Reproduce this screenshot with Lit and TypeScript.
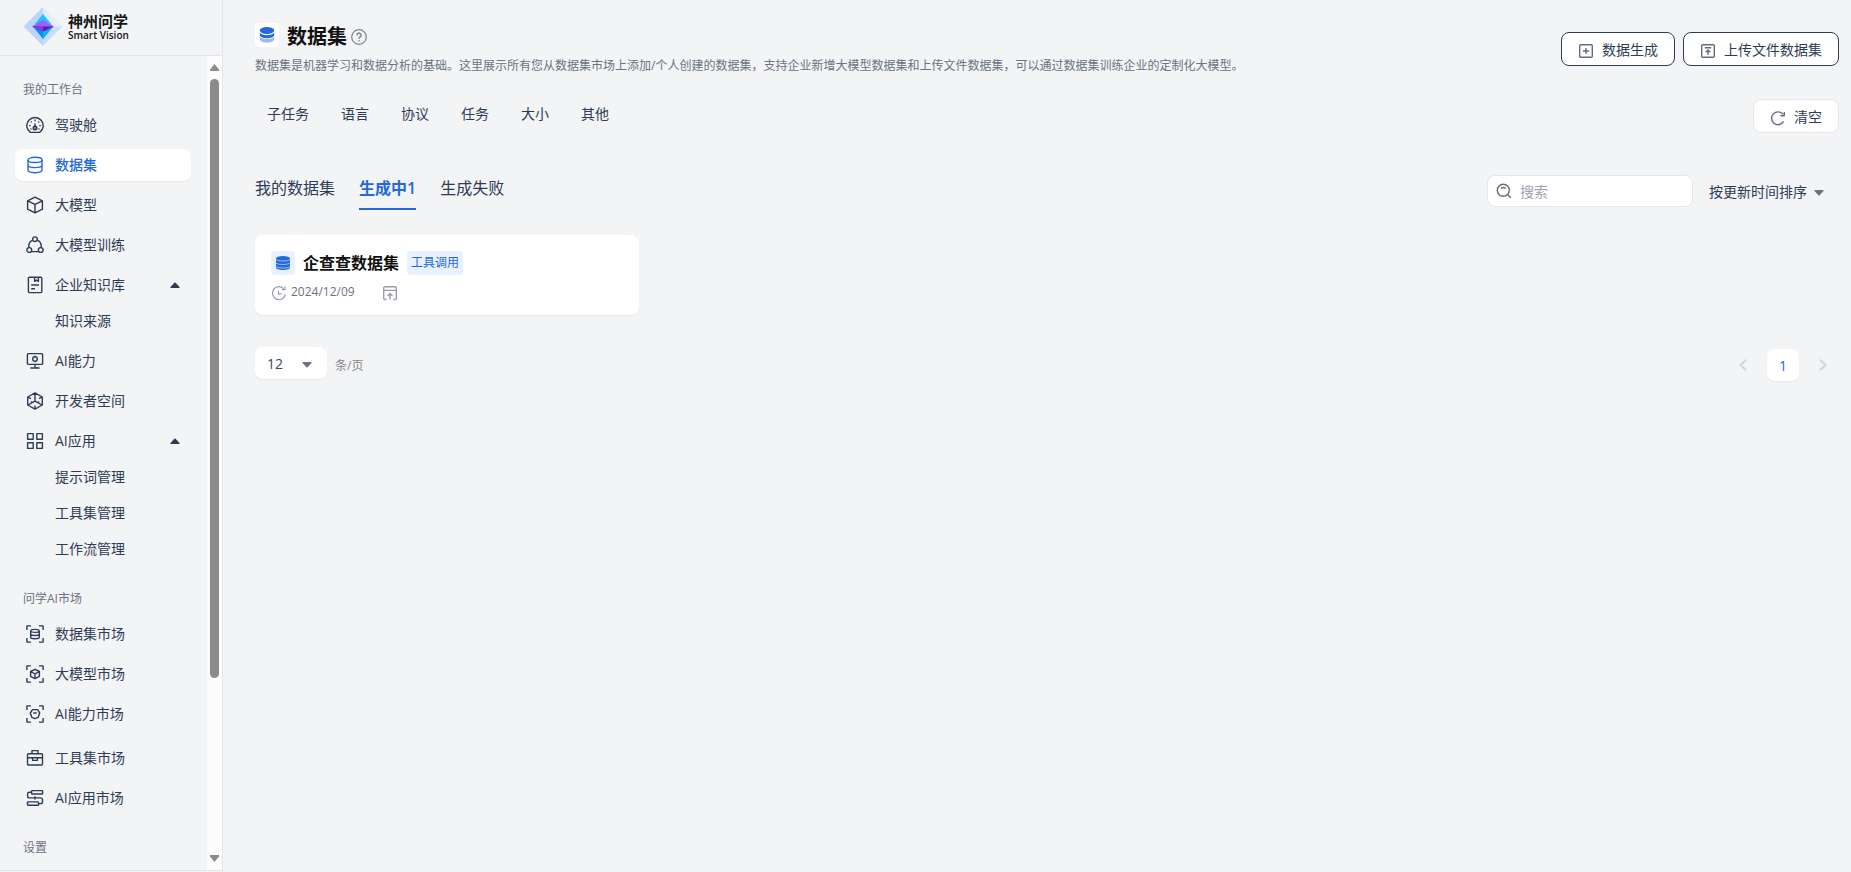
import { LitElement, html, css, svg, nothing } from "lit";
import { customElement, property, state } from "lit/decorators.js";
import { classMap } from "lit/directives/class-map.js";

const corners = svg`<path d="M.9 5V.9H5M13 .9h4.1V5M17.1 13v4.1H13M5 17.1H.9V13"/>`;

const icons: Record<string, unknown> = {
  gauge: svg`<path d="M4.300 16.400A8.200 8.200 0 1 1 13.700 16.400Z"/><circle cx="9" cy="12" r="1.600" stroke-width="1.800"/><path d="M9 10V7.400M9 3.600v1.600M4.800 5.400l.9.9M13.200 5.400l-.9.9M3.200 9.600h1.500M13.300 9.600h1.500M4.500 13h1M12.500 13h1"/>`,
  data: svg`<ellipse cx="9" cy="3.900" rx="7" ry="2.600"/><path d="M2 3.900v10.200c0 1.500 3.100 2.600 7 2.600s7-1.100 7-2.600V3.900M2 9c0 1.500 3.100 2.600 7 2.600S16 10.500 16 9"/>`,
  cube: svg`<path d="M9 1.200 16.400 4.800v8.400L9 16.800 1.600 13.200V4.800ZM1.600 4.800 9 8.400l7.400-3.600M9 8.400v8.400"/>`,
  train: svg`<circle cx="9" cy="3.200" r="2.300"/><circle cx="3.300" cy="14" r="2.400"/><circle cx="14.700" cy="14" r="2.400"/><path d="M6.600 4.200C3.800 5.500 2.500 8.300 2.800 11.600M11.400 4.200c2.800 1.300 4.100 4.100 3.800 7.400M5.700 15.600h6.600"/>`,
  book: svg`<rect x="2.400" y="1.200" width="13.400" height="15.400" rx="1"/><path d="M8.600 1.400v4l1.900-1.200 1.900 1.200v-4M5.200 9h7.800M5.200 12.800h3.800"/>`,
  screen: svg`<rect x="1.400" y="1.600" width="15.200" height="10.800" rx="1"/><circle cx="9" cy="7" r="2.300"/><path d="M9 3.700v1M9 9.300v1M9 12.400v3.400M4.400 16h9.200"/>`,
  dev: svg`<path d="M9 .9 16.300 5v8L9 17.100 1.700 13V5ZM9 1v8.200L2 13M9 9.200l7 3.800M9 13.600V17M2 5l3 1.700M16 5l-3 1.700"/><path d="M5.500 9.200v1.500M12.500 9.200v1.500"/>`,
  apps: svg`<rect x="1.600" y="1.600" width="5.600" height="5.600"/><rect x="10.800" y="1.600" width="5.600" height="5.600"/><rect x="1.600" y="10.800" width="5.600" height="5.600"/><rect x="10.800" y="10.800" width="5.600" height="5.600"/>`,
  dataMarket: svg`${corners}<ellipse cx="9" cy="5.900" rx="4.300" ry="1.500"/><path d="M4.700 5.900v6.400c0 .8 1.900 1.500 4.300 1.500s4.300-.7 4.300-1.500V5.900M4.700 9c0 .8 1.900 1.500 4.300 1.500s4.300-.7 4.300-1.500"/>`,
  cubeMarket: svg`${corners}<path d="m9 4.300 4.400 2.200v4.800L9 13.600l-4.400-2.300V6.500ZM4.600 6.500 9 8.800l4.400-2.300M9 8.800v4.800"/>`,
  skillMarket: svg`${corners}<path d="M6.500 4.600h5L13.700 8l-1.500 4.300L9 13.700l-3.200-1.400L4.300 8ZM7.300 8h3.400"/>`,
  toolbox: svg`<rect x="1.500" y="4.800" width="15" height="11.200" rx="1"/><path d="M6 4.600V1.600h6v3M1.600 8.800h4.800M11.600 8.800h4.800M6.600 8.800h4.800v2.600H6.600Z"/>`,
  flow: svg`<rect x="5.600" y="1.600" width="11" height="3.400" rx=".6"/><rect x="1.500" y="12.900" width="11" height="3.400" rx=".6"/><path d="M5.600 3.300H3.400C2.200 3.300 1.600 4 1.600 5v1.900c0 1.100.6 2 1.800 2h11.200c1.200 0 1.900.8 1.900 1.900v1.900c0 1-.7 1.900-1.900 1.900h-2.100M9 7.200v3.400"/>`,
};

interface Item { label: string; icon: string; children?: string[] }

const workbench: Item[] = [
  { label: "驾驶舱", icon: "gauge" },
  { label: "数据集", icon: "data" },
  { label: "大模型", icon: "cube" },
  { label: "大模型训练", icon: "train" },
  { label: "企业知识库", icon: "book", children: ["知识来源"] },
  { label: "AI能力", icon: "screen" },
  { label: "开发者空间", icon: "dev" },
  { label: "AI应用", icon: "apps", children: ["提示词管理", "工具集管理", "工作流管理"] },
];
const market: Item[] = [
  { label: "数据集市场", icon: "dataMarket" },
  { label: "大模型市场", icon: "cubeMarket" },
  { label: "AI能力市场", icon: "skillMarket" },
];
const marketTools: Item[] = [
  { label: "工具集市场", icon: "toolbox" },
  { label: "AI应用市场", icon: "flow" },
];

const caret = (cls: string, up = false) => html`<svg class=${cls} viewBox="0 0 10 6" width="10" height="6" aria-hidden="true">
  <path d=${up ? "M4.400.7a.9.9 0 0 1 1.200 0L9.500 5a.6.6 0 0 1-.4 1H.9a.6.6 0 0 1-.4-1Z" : "M4.400 5.300a.9.9 0 0 0 1.200 0L9.500 1a.6.6 0 0 0-.4-1H.9a.6.6 0 0 0-.4 1Z"} fill="currentColor"/></svg>`;

@customElement("side-nav")
export class SideNav extends LitElement {
  @property() active = "数据集";
  @state() private collapsed = new Set<string>();

  static styles = css`
    :host { display: flex; flex-direction: column; box-sizing: border-box; width: 223px; height: 100vh; flex: none; padding-bottom: 1px; border-right: 1px solid #e4e5ec; color: #2f3b55; font-size: 14px; }
    .brand { display: flex; align-items: center; gap: 4px; box-sizing: border-box; height: 56px; flex: none; padding: 0 0 2px 22px; border-bottom: 1px solid #e4e5ec; }
    .name { display: flex; flex-direction: column; color: #151515; }
    .cn { font-size: 15px; font-weight: 700; line-height: 16px; }
    .en { font-size: 10px; font-weight: 600; line-height: 12px; }
    .body { display: flex; flex: 1; min-height: 0; border-bottom: 1px solid #e4e5ec; }
    nav { flex: 1; overflow: hidden; padding: 0 16px 0 15px; }
    h2 { margin: 25px 0 10px 8px; font-size: 12px; font-weight: 400; line-height: 18px; color: #6b7280; }
    ul { list-style: none; margin: 0; padding: 0; display: flex; flex-direction: column; gap: 8px; }
    ul + ul { margin-top: 12px; }
    .subs { gap: 4px; margin-top: 4px; }
    a { display: flex; align-items: center; gap: 11px; height: 32px; padding: 0 11px; border-radius: 8px; color: inherit; text-decoration: none; }
    .subs a { padding-left: 40px; }
    .label { padding-bottom: 2px; }
    .active { background: #fff; color: #2468dc; font-weight: 500; box-shadow: 0 1px 2px #0000000d; }
    .glyph { width: 18px; height: 18px; flex: none; fill: none; stroke: currentColor; stroke-width: 1.4; stroke-linejoin: round; }
    .caret { margin-left: auto; }
    .bar { display: flex; flex-direction: column; align-items: center; width: 15px; flex: none; padding: 8px 0; box-sizing: border-box; background: #fcfcfc; color: #8b8b8b; }
    .track { display: flex; flex-direction: column; flex: 1; margin: 8px 0; }
    .thumb { width: 9px; height: 78%; border-radius: 5px; background: #8b8b8b; }
  `;

  private toggle(e: Event, item: Item) {
    e.preventDefault();
    if (item.children) {
      const next = new Set(this.collapsed);
      if (!next.delete(item.label)) next.add(item.label);
      this.collapsed = next;
    } else this.active = item.label;
  }

  private list(items: Item[]) {
    return html`<ul>${items.map((i) => html`<li>
      <a href="#" class=${classMap({ active: i.label === this.active })} @click=${(e: Event) => this.toggle(e, i)}>
        <svg class="glyph" viewBox="0 0 18 18" aria-hidden="true">${icons[i.icon]}</svg>
        <span class="label">${i.label}</span>
        ${i.children ? caret("caret", !this.collapsed.has(i.label)) : nothing}
      </a>
      ${i.children && !this.collapsed.has(i.label)
        ? html`<ul class="subs">${i.children.map((c) => html`<li><a href="#"><span class="label">${c}</span></a></li>`)}</ul>` : nothing}
    </li>`)}</ul>`;
  }

  render() {
    return html`
      <div class="brand">
        <svg width="42" height="42" viewBox="0 0 42 42" aria-hidden="true">
          <path d="M21 1 1.500 20.500 21 40Z" fill="#bcd5ff"/><path d="M21 1 40.500 20.500H21Z" fill="#e3edff"/><path d="M21 40 40.500 20.500H21Z" fill="#c9ddff"/>
          <path d="M21 8 12 19l9-4 9 4Z" fill="#16c7f7"/><path d="M21 33 11 20.500h20Z" fill="#0a8df2"/><path d="M21 33V20.500h10Z" fill="#08b4f5"/>
          <path d="M21 14 10 20.500 21 25.500 32 20.500Z" fill="#a45cf6"/><path d="M10 20.500h22L21 25.500Z" fill="#4a25b8"/><path d="M10 20.500h11v5Z" fill="#7b43e6"/>
        </svg>
        <div class="name"><span class="cn">神州问学</span><span class="en">Smart Vision</span></div>
      </div>
      <div class="body">
        <nav>
          <h2>我的工作台</h2>${this.list(workbench)}
          <h2>问学AI市场</h2>${this.list(market)}${this.list(marketTools)}
          <h2>设置</h2>
        </nav>
        <div class="bar" aria-hidden="true">
          <svg width="9" height="7" viewBox="0 0 9 7"><path d="M4.500 0 9 5.500V7H0V5.500Z" fill="currentColor"/></svg>
          <div class="track"><div class="thumb"></div></div>
          <svg width="9" height="7" viewBox="0 0 9 7"><path d="M4.500 7 9 1.500V0H0v1.500Z" fill="currentColor"/></svg>
        </div>
      </div>`;
  }
}

@customElement("app-root")
export class AppRoot extends LitElement {
  @state() private tab = "生成中1";

  static styles = css`
    :host { display: flex; min-height: 100vh; background: #f3f4f6; color: #2f3b55; font-family: "Open Sans", "Noto Sans CJK SC", sans-serif; font-size: 14px; }
    main { flex: 1; min-width: 0; box-sizing: border-box; padding: 23px 12px 0 32px; }
    button, input, select { font: inherit; color: inherit; margin: 0; }
    button { cursor: pointer; }
    svg { flex: none; }
    .line { fill: none; stroke: currentColor; stroke-width: 1.400; stroke-linejoin: round; }
    .head, .row, .title, .actions, .filters, .tabs, .tools, .meta, .pager, .size, .pages { display: flex; }
    .head { align-items: center; justify-content: space-between; gap: 24px; }
    .title { align-items: center; gap: 8px; height: 24px; }
    .tile { display: flex; align-items: center; justify-content: center; width: 24px; height: 24px; border-radius: 4px; background: #fff; color: #2468dc; flex: none; }
    h1 { margin: 0; font-size: 20px; line-height: 24px; font-weight: 700; color: #111; }
    .help { display: flex; align-items: center; gap: 4px; padding-top: 3px; color: #7c8290; }
    .desc { margin: 10px 0 0; font-size: 12px; line-height: 18px; color: #6b7280; }
    .actions { gap: 8px; flex: none; }
    .btn { display: flex; align-items: center; gap: 8px; box-sizing: border-box; height: 34px; padding: 0 16px; border: 1px solid #2f3b55; border-radius: 8px; background: #fff; white-space: nowrap; }
    .btn svg { color: #646d80; margin-top: 3px; }
    .soft { border-color: #e5e7eb; }
    .row { justify-content: space-between; align-items: flex-start; margin-top: 24px; }
    .filters { gap: 32px; padding-left: 12px; }
    .filter { border: 0; padding: 0; background: none; line-height: 30px; }
    .listing { margin-top: 42px; }
    .tabs { gap: 24px; font-size: 16px; }
    .tab { border: 0; border-bottom: 2px solid transparent; padding: 0 0 7px; background: none; line-height: 26px; }
    .on { color: #2468dc; font-weight: 600; border-bottom-color: #2468dc; }
    .tools { gap: 16px; }
    .search { display: flex; align-items: center; gap: 8px; box-sizing: border-box; width: 206px; height: 32px; padding: 0 8px; border: 1px solid #e5e7eb; border-radius: 8px; background: #fff; color: #646d80; }
    .search input { flex: 1; min-width: 0; border: 0; padding: 0; outline: 0; background: none; }
    .search input::placeholder { color: #9ca3af; opacity: 1; }
    .pick { display: grid; align-items: center; }
    .pick > * { grid-area: 1 / 1; }
    .pick select { appearance: none; border: 0; outline: 0; height: 32px; padding: 0 32px 0 0; background: none; cursor: pointer; }
    .pick svg { justify-self: end; margin: 3px 15px 0 0; color: #6b7280; pointer-events: none; }
    .cards { display: grid; grid-template-columns: repeat(4, 1fr); gap: 16px; margin-top: 25px; }
    .card { box-sizing: border-box; height: 80px; padding: 16px; border-radius: 8px; background: #fff; box-shadow: 0 1px 2px #0000000d; }
    .blue { background: #e8f1ff; }
    h3 { margin: 0; font-size: 16px; line-height: 24px; font-weight: 600; color: #111; }
    .tag { padding: 0 4px; border-radius: 4px; background: #e8f1ff; color: #2468dc; font-size: 12px; line-height: 24px; }
    .meta { align-items: center; gap: 4px; margin-top: 8px; font-size: 12px; line-height: 18px; color: #6b7280; }
    .meta svg { color: #989da8; margin-top: 2px; }
    time { margin-right: 23px; }
    .pager { justify-content: space-between; align-items: flex-start; margin-top: 32px; }
    .size { align-items: center; gap: 8px; font-size: 12px; color: #888; }
    .size label { padding-top: 3px; }
    .count { width: 72px; border-radius: 8px; background: #fff; box-shadow: 0 1px 2px #0000000d; font-size: 14px; color: #3f4654; }
    .count select { width: 100%; padding-left: 12px; }
    .pages { gap: 8px; padding-top: 2px; }
    .page { display: flex; align-items: center; justify-content: center; width: 32px; height: 32px; padding: 0; border: 0; border-radius: 8px; background: none; color: #d3d4d8; }
    .current { background: #fff; color: #2468dc; box-shadow: 0 1px 2px #0000000d; }
  `;

  render() {
    return html`
      <side-nav></side-nav>
      <main>
        <header class="head">
          <div>
            <div class="title">
              <span class="tile"><svg width="16" height="16" viewBox="0 0 16 16" fill="currentColor" aria-hidden="true">
                <path opacity=".45" d="M.8 9.500v2.400C.8 14 4 15.600 8 15.600s7.200-1.600 7.200-3.700V9.500c-1 1.500-4 2.600-7.200 2.600S1.800 11 .8 9.500Z"/>
                <path d="M.8 5.500V8C.8 9.800 4 11.300 8 11.300S15.200 9.800 15.200 8V5.500c-1 1.700-4 2.700-7.200 2.700S1.800 7.200.8 5.500Z"/><ellipse cx="8" cy="3.500" rx="7.200" ry="3.400"/></svg></span>
              <div class="help"><h1>数据集</h1>
                <svg class="line" width="16" height="16" viewBox="0 0 16 16" role="img" aria-label="帮助"><circle cx="8" cy="8" r="7.300" stroke-width="1.200"/><path d="M5.900 6.300a2.100 2.100 0 1 1 3.300 1.600C8.400 8.500 8 8.800 8 9.800M8 11v1.300"/></svg></div>
            </div>
            <p class="desc">数据集是机器学习和数据分析的基础。这里展示所有您从数据集市场上添加/个人创建的数据集，支持企业新增大模型数据集和上传文件数据集，可以通过数据集训练企业的定制化大模型。</p>
          </div>
          <div class="actions">
            <button class="btn"><svg class="line" width="16" height="16" viewBox="0 0 16 16" aria-hidden="true"><rect x="1.700" y="1.700" width="12.600" height="12.600" rx="1"/><path d="M8 5v6M5 8h6"/></svg>数据生成</button>
            <button class="btn"><svg class="line" width="16" height="16" viewBox="0 0 16 16" aria-hidden="true"><rect x="1.700" y="1.700" width="12.600" height="12.600" rx="1"/><path d="M4.800 4.700h6.400M8 12V7M5.600 9.300 8 6.900l2.400 2.400"/></svg>上传文件数据集</button>
          </div>
        </header>
        <div class="row">
          <div class="filters">${["子任务", "语言", "协议", "任务", "大小", "其他"].map((f) => html`<button class="filter">${f}</button>`)}</div>
          <button class="btn soft"><svg class="line" width="16" height="16" viewBox="0 0 16 16" aria-hidden="true"><path d="M13.600 11.400A6.400 6.400 0 1 1 13 4.300M14.300 2v3.800h-3.800"/></svg>清空</button>
        </div>
        <div class="row listing">
          <div class="tabs" role="tablist">${["我的数据集", "生成中1", "生成失败"].map((t) => html`<button role="tab" aria-selected=${t === this.tab} class=${classMap({ tab: true, on: t === this.tab })} @click=${() => (this.tab = t)}>${t}</button>`)}</div>
          <div class="tools">
            <label class="search"><svg class="line" width="16" height="16" viewBox="0 0 16 16" aria-hidden="true"><circle cx="7.300" cy="7.300" r="6"/><path d="m11.800 11.800 3 3M5 5.500c1.200-1.400 3.400-1.400 4.600 0"/></svg><input type="search" placeholder="搜索" aria-label="搜索" /></label>
            <div class="pick"><select aria-label="排序"><option>按更新时间排序</option></select>${caret("")}</div>
          </div>
        </div>
        <section class="cards">
          <article class="card">
            <div class="title">
              <span class="tile blue"><svg width="16" height="16" viewBox="0 0 16 16" aria-hidden="true"><path d="M1 3.500v9C1 14 4 15 8 15s7-1 7-2.500v-9Z" fill="currentColor"/><ellipse cx="8" cy="3.300" rx="7" ry="2.300" fill="currentColor"/><path d="M1 4.500c1.500 2 12.500 2 14 0M1 8c1.500 2 12.500 2 14 0M1 11.500c1.500 2 12.500 2 14 0" fill="none" stroke="#a9c8fa" stroke-width=".9"/></svg></span>
              <h3>企查查数据集</h3><span class="tag">工具调用</span>
            </div>
            <div class="meta">
              <svg class="line" width="16" height="16" viewBox="0 0 16 16" aria-hidden="true"><path stroke-width="1.200" d="M14.300 9.500A6.500 6.500 0 1 1 12.600 3.600M14 1.500v3.200h-3.200M7.500 5.500v3.300h3.200"/></svg>
              <time>2024/12/09</time>
              <svg class="line" width="16" height="16" viewBox="0 0 16 16" aria-hidden="true"><path d="M4.500 14.500H3a1.300 1.300 0 0 1-1.300-1.300V3A1.300 1.300 0 0 1 3 1.700h10A1.300 1.300 0 0 1 14.300 3v10.200a1.300 1.300 0 0 1-1.300 1.300h-1.500M1.700 5.400h12.600M8 14.500V8.600M5.500 11 8 8.500l2.500 2.500"/></svg>
            </div>
          </article>
        </section>
        <footer class="pager">
          <div class="size">
            <div class="pick count"><select id="size" aria-label="每页条数"><option>12</option><option>24</option></select>${caret("")}</div>
            <label for="size">条/页</label>
          </div>
          <div class="pages">
            <button class="page" aria-label="上一页"><svg class="line" width="8" height="12" viewBox="0 0 8 12"><path stroke-width="2" d="M7 .8 1.500 6 7 11.200"/></svg></button>
            <button class="page current">1</button>
            <button class="page" aria-label="下一页"><svg class="line" width="8" height="12" viewBox="0 0 8 12"><path stroke-width="2" d="M1 .8 6.500 6 1 11.200"/></svg></button>
          </div>
        </footer>
      </main>`;
  }
}
